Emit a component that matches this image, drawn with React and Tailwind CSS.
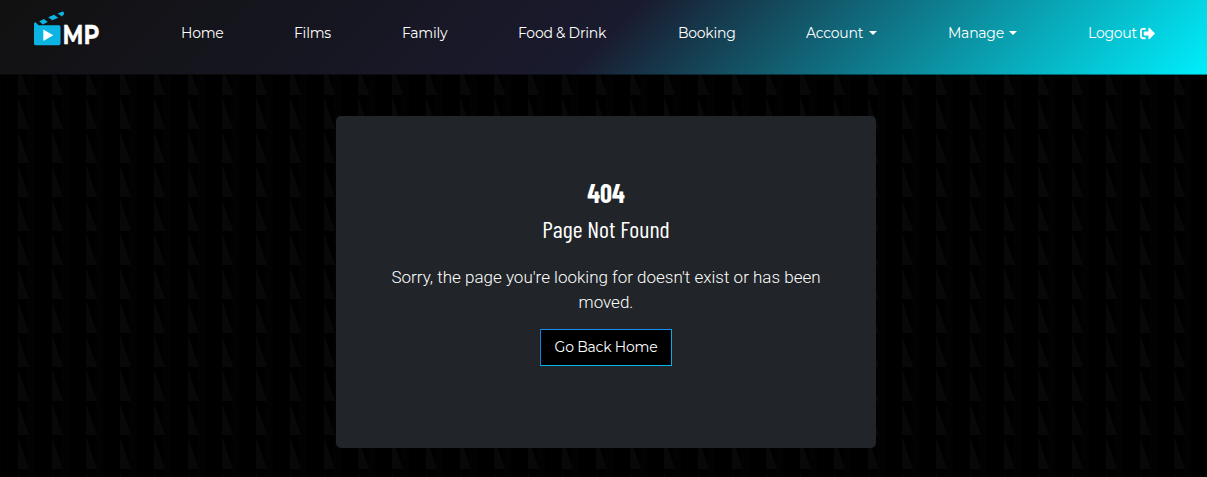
import { FaSignOutAlt } from "react-icons/fa";

const links = [
  { label: "Home", box: "w-[42px]" },
  { label: "Films", box: "w-[37px]" },
  { label: "Family", box: "w-[45px]" },
  { label: "Food & Drink", box: "w-[89px]" },
  { label: "Booking", box: "w-[57px]" },
  { label: "Account", box: "w-[71px]", caret: true },
  { label: "Manage", box: "w-[69px]", caret: true },
  { label: "Logout", box: "w-[67px]", exit: true },
];

function Logo() {
  return (
    <svg className="ml-[33px] h-[40px] w-[72px] shrink-0 overflow-visible" viewBox="0 0 72 40">
      <g fill="#0cb4e4">
        <rect x="1" y="14.3" width="26.5" height="19.9" rx="1.6" />
        <path d="M1 15V12.6Q1 11.4 2.6 11.2L6 14.8Z" />
        <path d="M6.2 10.2 11 8 14.8 11 9.8 13.4Z" />
        <path d="M15.2 6.3 21 3.8 25.2 6.8 19.4 9.3Z" />
        <path d="M24.6 2.4 29.6.6Q31.6 1 30.8 3.2L29 5.6Z" />
      </g>
      <path d="M10.3 18.4 20.3 24.3 10.3 30Z" fill="#fff" />
      <text x="29.5" y="32.5" textLength="37" lengthAdjust="spacingAndGlyphs" fontFamily="Montserrat, sans-serif" fontWeight="700" fontSize="27" fill="#fff" stroke="#fff" strokeWidth="0.3">MP</text>
    </svg>
  );
}

function Backdrop() {
  return (
    <svg className="absolute inset-0 -z-10 h-full w-full" aria-hidden="true">
      <defs>
        <pattern id="fins" width="34" height="34" y="27" patternUnits="userSpaceOnUse">
          <rect width="34" height="34" fill="#000" />
          <rect width="1" height="34" fill="#020202" />
          <rect x="27" width="7" height="34" fill="#020202" />
          <path d="M18 2.5 29 34H18Z" fill="#080808" />
        </pattern>
      </defs>
      <rect width="100%" height="100%" fill="url(#fins)" />
    </svg>
  );
}

export default function App() {
  return (
    <div className="relative isolate h-[477px] overflow-hidden bg-black text-white">
      <Backdrop />
      <nav className="flex h-[75px] items-start bg-[linear-gradient(135deg,#111_0%,#1a1a2e_50%,#00eefc_100%)] pt-[11px] shadow-[inset_0_-1px_0_rgba(0,0,0,0.45)]">
        <Logo />
        <div className="ml-[76px] flex h-[44px] items-center gap-[71px] font-['Montserrat',sans-serif] text-[14px] leading-[22px] tracking-[-0.25px]">
          {links.map((l) => (
            <a key={l.label} className={`flex shrink-0 items-center justify-between whitespace-nowrap ${l.box}`}>
              <span>{l.label}</span>
              {l.caret && <span className="h-0 w-0 border-x-[4px] border-t-[4px] border-x-transparent border-t-white" />}
              {l.exit && <FaSignOutAlt className="h-[15px] w-[15px] shrink-0" />}
            </a>
          ))}
        </div>
      </nav>
      <main className="ml-[336px] mt-[41px] flex h-[332px] w-[540px] flex-col items-center rounded-[5px] bg-[#212529] pt-[59px] text-center">
        <h1 className="h-[36px] whitespace-nowrap font-['Barlow_Condensed',sans-serif] text-[26.4px] font-bold leading-[36px]">404</h1>
        <h2 className="mt-[3px] h-[30px] whitespace-nowrap font-['Barlow_Condensed',sans-serif] text-[24px] leading-[30px]">Page Not Found</h2>
        <p className="mt-[21px] w-[450px] font-['Roboto',sans-serif] text-[17px] font-light leading-[25px]">
          Sorry, the page you're looking for doesn't exist or has been moved.
        </p>
        <button className="mt-[14px] h-[37px] w-[132px] whitespace-nowrap border border-b-[#00b4f0] border-l-[#0d80e0] border-r-[#00aeea] border-t-[#1590f5] bg-black pb-px font-['Montserrat',sans-serif] text-[14px] leading-[22px] tracking-[-0.2px]">
          Go Back Home
        </button>
      </main>
    </div>
  );
}
